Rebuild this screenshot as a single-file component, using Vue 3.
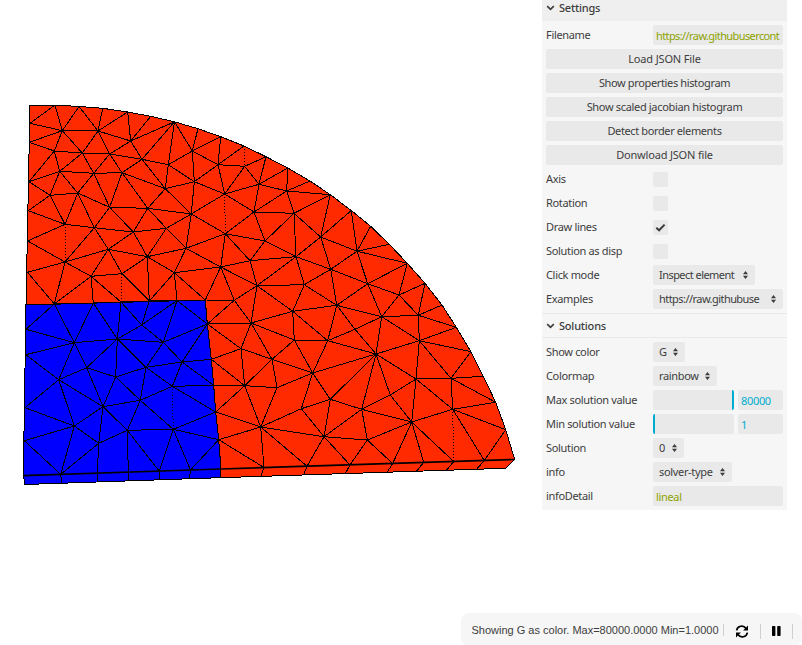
<script setup>
const points = {}
const define = (text) => {
  text.trim().split(/\s+/).forEach((item) => {
    const [name, xy] = item.split(':')
    points[name] = xy
  })
}

// outer arc
define(`A0:30,105 A1:55,105 A2:79,106.5 A3:102.7,108.3 A4:127.7,112 A5:150.7,116.3 A6:174.5,121.8
A7:198,128.7 A8:220.7,136.7 A9:244,146 A10:266,156.7 A11:287.7,168 A12:310,181 A13:330.3,194.7
A14:351.3,210.5 A15:370.7,226.3 A16:389.3,244.3 A17:407.3,263.3 A18:425,283.3 A19:442,305
A20:456.3,327.3 A21:471,351.7 A22:483.3,376.3 A23:495.7,402.3 A24:505.7,429.7 A25:514.7,459.5`)
// left side, region interface
define(`L1:30,123.3 L2:29.3,142.3 L3:29,181.7 L4:28.3,210.7 L5:27.7,241 L6:27.5,272.3 L7:26,305
L8:26,329.3 L9:25.7,354.7 L10:25,407.7 L11:24.3,440.7
I1:54.3,304 I2:93.3,303 I3:121,302 I4:149.3,301 I5:177,300.5 I6:205.3,300
J1:207.3,324 J2:211.3,359.3 J3:213.7,385.3 J4:215.7,412 J5:218.7,439.7`)
// front edges
define(`B0:23.3,475.7 B1:60.7,474.3 B2:97.3,473.2 B3:128.3,472.2 B4:159.3,471.2 B5:190.5,470 B6:221,469
B7:264,467.5 B8:307,466.2 B9:350,465 B10:392.7,463.5 B11:423.7,462.3 B12:453.7,461.5 B13:484.3,460.5
C0:25,484.5 C1:61.7,483 C2:97.7,481.7 C3:128.7,481 C4:159.3,479.7 C5:189.5,478.7 C6:220,477.7
C7:261,476.3 C8:303.7,474.7 C9:345.5,473.3 C10:387.3,472 C11:416.7,471 C12:446.7,470 C13:476.7,469.2 C14:505.7,468.3`)
// interior of the ring
define(`a:62.3,130.7 b:98,131 c:130.7,141 d:54.3,151 e:82.3,153 f:109.7,154 g:142,159.3 h:168.3,164.7
i:59.7,171.3 j:93.7,173.3 k:122,172.7 l:165.3,188.7 m:50,195.3 n:77.7,193 o:109.7,207.3 p:147.7,208.3
q:191.3,214 r:192.3,151 s:194.3,181.7 t:65,224.3 u:94.3,227.7 v:133.3,232 w:166.3,228.3 x:108.3,249.3
y:65,262 z:147.3,256.7 aa:186,248.3 ab:91,276.3 ac:122,273.7 ad:174.3,272.7 ae:218,164.7 af:244.7,166.3
ag:259,184.3 ah:224.7,194 ai:254,212 aj:286.7,191 ak:294,213.3 al:225.3,233.7 am:265,241 an:250,260.7
ao:220.7,267 ap:296,256.7 aq:320.7,237 ar:257,285.7 as:234.3,300.3 at:304.3,284.7 au:330.7,269.3
av:357,251.2 aw:336.7,305.3 ax:292.7,311.3 ay:251,323 az:294.3,340 ba:327.7,340.7 bb:241,348.7
bc:367.7,283.7 bd:399,295 be:381.7,316.7 bf:418.3,315.3 bg:355,329.3 bh:419.3,340.7 bi:376,354
bj:451,378.3 bk:416,379 bl:452.7,409.3 bm:411.7,422 bn:361.7,409.3 bo:390.3,395 bp:367.3,440
bq:272,359.3 br:312.7,373 bs:244.7,385.7 bt:277,387.7 bu:301.3,408.7 bv:330.3,399.3 bw:260.7,427 bx:324,436.7`)
// interior of the core
define(`ca:74.3,342.7 cb:117.3,339 cc:141.7,325 cd:163.3,342.3 ce:58.7,379.7 cf:86.7,367.7 cg:115.7,377
ch:146,367.3 ci:182,362 cj:103,406.7 ck:140.3,400.3 cl:172.3,386.3 cm:74.3,426 cn:98.7,443.3 co:127.3,430.3 cp:173.3,429.3`)

// each entry: origin>neighbours
const links = `A1>L1,a A2>a,b A3>b A4>b,c A5>c A6>c,g,h,r b>c,e,f a>b,L1,L2,d,e c>f,g d>L2,L3,i,e e>f,i,j
f>j,k,g g>k,h,l h>l,r,s k>j,l,o,p i>j,L3,m,n m>L3,L4,n,t n>t,j,o,u j>o o>p,u,v p>l,q,v,w l>s,q
t>L4,L5,u y>L5,L6,u,x,I1,ab u>x,v v>x,z,w w>q,z,aa x>ab,ac,z z>aa,ac,ad,I4 aa>q,ad,ao,al
ad>ao,I4,I5,I6 L6>I1 ab>I1,I2,I3,ac ac>I4 s>q,ah,r,ae r>A7,A8,ae ae>A8,A9,af,ah af>A10,ag,ah
ag>A10,A11,ah,ai,aj aj>A11,A12,A13,ai,ak ak>ai,A13,am,ap,aq ah>q,ai al>ai,q,am,an,ao ai>am
aq>A13,A14,av,au,ap av>A14,A15,A16,A17,au,bc am>an,ap an>ao,ap,ar ao>ar,as,I6 ap>ar,at,au
au>at,aw,bc ar>as,at,ax,ay as>I6,J1,ay at>ax,aw aw>ax,bc,be,bg,ba bg>ba,be,bi ax>ay,az,ba
az>ba,ay,bq,br ba>br,bi ay>J1,bb,bq bb>J1,J2,bq,bs bs>J2,J3,J4,bq,bt,bw bt>bq,br,bw bq>br
br>bu,bv,bi bu>bw,bv,bx bv>bx,bi,bn bw>J4,J5,B7,B8,bx bx>B8,B9,bn,bp J5>B7 bp>B9,B10,bm,bn
bn>bi,bo,bm bo>bi,bm,bk bm>B10,B11,B12,bl,bk bk>bi,bh,bj,bl bh>bi,be,bf,A20,A21,bj
bj>A21,A22,A23,bl bl>A23,A24,B13 A24>B13 be>bi,bf,bd,bc bd>bc,A17,A18,bf bc>A17 bf>A18,A19,A20
I1>L8,ca ca>L8,I2,L9,ce,cf cb>I2,I3,cc,ca,cd cc>I3,I4,I5,cd I5>cd,J1 J1>cd,ci L9>ce
cf>ce,cb,cg,cj cb>cg,ch cg>ch,cj,ck ch>ck,cl,cd,ci ci>cd,cl,J2,J3 cl>J3,J4,ck ck>cj,co,cp
cj>ce,cm,cn,co ce>L10,cm cm>L10,L11,B1,cn L11>B1 cn>B1,B2,co co>B3,B4,cp cp>B4,B5,J4,J5 J5>B5
B1>C1 B2>C2 B3>C3 B4>C4 B5>C5 B6>C6 B7>C7 B8>C8 B9>C9 B10>C10 B11>C11 B12>C12 B13>C13`

const toPath = (text) =>
  text.trim().split(/\s+/).map((entry) => {
    const [from, list] = entry.split('>')
    return list.split(',').map((to) => `M${points[from]}L${points[to]}`).join('')
  }).join('')

const meshPath = toPath(links)
const faintPath = toPath('t>y A9>af ah>al ac>I3 cl>cp bl>B12')
const outline = (names) => names.split(' ').map((n) => points[n]).join(' ')
const arc = Array.from({ length: 26 }, (_, n) => 'A' + n).join(' ')
const ring = outline(arc + ' C14 C6 B6 J5 J4 J3 J2 J1 I6 L7')
const core = outline('L7 I1 I2 I3 I4 I5 I6 J1 J2 J3 J4 J5 B6 C6 C0 B0')
const ridge = outline('B0 B6 A25')

const buttons = [
  { label: 'Load JSON File', tracking: -0.15 },
  { label: 'Show properties histogram', tracking: -0.36 },
  { label: 'Show scaled jacobian histogram', tracking: -0.33 },
  { label: 'Detect border elements', tracking: -0.38 },
  { label: 'Donwload JSON file', tracking: -0.18 },
]
const toggles = [
  { label: 'Axis', on: false },
  { label: 'Rotation', on: false },
  { label: 'Draw lines', on: true },
  { label: 'Solution as disp', on: false },
]
const settingsSelects = [
  { label: 'Click mode', value: 'Inspect element', width: 102 },
  { label: 'Examples', value: 'https://raw.githubuse', width: 130 },
]
const colorSelects = [
  { label: 'Show color', value: 'G', width: 32 },
  { label: 'Colormap', value: 'rainbow', width: 64 },
]
const sliders = [
  { label: 'Max solution value', value: '80000', fill: 100 },
  { label: 'Min solution value', value: '1', fill: 0 },
]
const infoSelects = [
  { label: 'Solution', value: '0', width: 31 },
  { label: 'info', value: 'solver-type', width: 79 },
]
</script>

<template>
  <main class="stage">
    <svg class="mesh" width="540" height="600" viewBox="0 0 540 600">
      <polygon :points="ring" fill="#ff2a00" />
      <polygon :points="core" fill="#0000ff" />
      <g class="lines">
        <path :d="meshPath" />
        <path class="faint" :d="faintPath" />
        <polygon :points="ring" />
        <polygon :points="core" />
        <polyline class="ridge" :points="ridge" />
      </g>
    </svg>

    <aside class="panel">
      <div class="title first">
        <svg width="9" height="6" viewBox="0 0 9 6"><path d="M1.2 1.2 4.5 4.3 7.8 1.2" /></svg>
        <span>Settings</span>
      </div>
      <div class="group">
        <div class="row">
          <span class="name">Filename</span>
          <div class="field text url">https://raw.githubusercont</div>
        </div>
        <button v-for="b in buttons" :key="b.label" :style="{ letterSpacing: b.tracking + 'px' }">{{ b.label }}</button>
        <div v-for="t in toggles" :key="t.label" class="row">
          <span class="name">{{ t.label }}</span>
          <div class="check">
            <svg v-if="t.on" width="15" height="15" viewBox="0 0 15 15"><path d="M3.3 7.8 6.1 10.3 11.6 4.6" /></svg>
          </div>
        </div>
        <div v-for="s in settingsSelects" :key="s.label" class="row">
          <span class="name">{{ s.label }}</span>
          <div class="select long" :style="{ width: s.width + 'px' }">
            <span>{{ s.value }}</span>
            <svg width="5" height="8" viewBox="0 0 5 8"><path d="M0 3.2 2.5 0 5 3.2zM0 4.8 2.5 8 5 4.8z" /></svg>
          </div>
        </div>
      </div>
      <div class="title">
        <svg width="9" height="6" viewBox="0 0 9 6"><path d="M1.2 1.2 4.5 4.3 7.8 1.2" /></svg>
        <span>Solutions</span>
      </div>
      <div class="group">
        <div v-for="s in colorSelects" :key="s.label" class="row">
          <span class="name">{{ s.label }}</span>
          <div class="select" :style="{ width: s.width + 'px' }">
            <span>{{ s.value }}</span>
            <svg width="5" height="8" viewBox="0 0 5 8"><path d="M0 3.2 2.5 0 5 3.2zM0 4.8 2.5 8 5 4.8z" /></svg>
          </div>
        </div>
        <div v-for="s in sliders" :key="s.label" class="row">
          <span class="name">{{ s.label }}</span>
          <div class="slider"><div class="fill" :style="{ width: s.fill + '%' }"></div></div>
          <div class="field number">{{ s.value }}</div>
        </div>
        <div v-for="s in infoSelects" :key="s.label" class="row">
          <span class="name">{{ s.label }}</span>
          <div class="select" :style="{ width: s.width + 'px' }">
            <span>{{ s.value }}</span>
            <svg width="5" height="8" viewBox="0 0 5 8"><path d="M0 3.2 2.5 0 5 3.2zM0 4.8 2.5 8 5 4.8z" /></svg>
          </div>
        </div>
        <div class="row">
          <span class="name">infoDetail</span>
          <div class="field text">lineal</div>
        </div>
      </div>
    </aside>

    <footer class="status">
      <span class="message">Showing G as color. Max=80000.0000 Min=1.0000</span>
      <span class="rule short"></span>
      <svg class="refresh" width="14" height="13" viewBox="0 0 14 13">
        <path class="stroke" d="M1.6 5.4A5.2 5.2 0 0 1 11 3.4M12.4 7.6A5.2 5.2 0 0 1 3 9.6" />
        <path d="M13 .5V5.4H8.1zM1 12.5V7.6H5.9z" />
      </svg>
      <span class="rule"></span>
      <svg class="pause" width="9" height="10" viewBox="0 0 9 10">
        <rect width="3.4" height="10" rx=".8" /><rect x="5.2" width="3.4" height="10" rx=".8" />
      </svg>
      <span class="rule"></span>
    </footer>
  </main>
</template>

<style>
body { margin: 0; background: #fff; }
</style>

<style scoped>
* { box-sizing: border-box; }
.stage {
  display: grid;
  grid-template-columns: 542px 245px 15px;
  grid-template-rows: 613px 32px;
  width: 802px;
  height: 645px;
  overflow: hidden;
}
.mesh { display: block; }
.lines { fill: none; stroke: #000; stroke-width: 1; shape-rendering: crispEdges; }
.faint { stroke-dasharray: 1 2; }
.ridge { stroke-width: 1.7; shape-rendering: auto; }
.panel {
  align-self: start;
  background: #f6f6f6;
  color: #3d3d3d;
  font: 11px/20px "Noto Sans", sans-serif;
  letter-spacing: -0.33px;
}
.title {
  display: flex;
  align-items: center;
  gap: 4px;
  height: 25px;
  padding: 0 4px;
  border-top: 1px solid #e9e9e9;
  border-bottom: 1px solid #e9e9e9;
  font-weight: 500;
  letter-spacing: -0.2px;
}
.title.first { height: 21px; padding-bottom: 5px; border: 0; background: #efefef; }
.title.first span { margin-top: -1px; }
.title path, .check path { fill: none; stroke: #3d3d3d; stroke-width: 1.7; }
.check path { stroke-width: 2; }
.group { display: flex; flex-direction: column; gap: 4px; padding: 4px; }
.row { display: flex; align-items: center; height: 20px; }
.name { flex: 0 0 107px; white-space: nowrap; }
button {
  height: 20px;
  padding: 0;
  border: 0;
  border-radius: 2px;
  background: #e9e9e9;
  color: inherit;
  font: inherit;
}
.field {
  height: 20px;
  padding: 1px 0 0 3px;
  border-radius: 2px;
  background: #e9e9e9;
  overflow: hidden;
  white-space: nowrap;
}
.text { width: 130px; color: #8da300; }
.url { letter-spacing: -0.6px; }
.number { width: 45px; margin-left: 4px; color: #00adcf; }
.check { width: 15px; height: 15px; border-radius: 2px; background: #e9e9e9; }
.check svg { display: block; }
.select {
  display: flex;
  align-items: center;
  justify-content: space-between;
  height: 20px;
  padding: 0 7px 0 6px;
  border-radius: 2px;
  background: #e9e9e9;
  white-space: nowrap;
}
.long { letter-spacing: -0.55px; }
.select svg { fill: #3d3d3d; flex: none; }
.slider { width: 81px; height: 20px; border-radius: 2px; background: #e9e9e9; overflow: hidden; }
.fill { min-width: 2px; height: 20px; border-right: 2px solid #00adcf; }
.status {
  grid-column: 1 / -1;
  display: flex;
  align-items: center;
  justify-self: end;
  width: 341px;
  height: 33px;
  padding: 2px 0 0 10.5px;
  border-radius: 8px;
  background: #f6f6f6;
  color: #3d3d3d;
  font: 11px/16px "Liberation Sans", sans-serif;
}
.message { width: 251.5px; margin-top: -2px; white-space: nowrap; }
.rule { width: 1px; height: 15px; margin-top: 1px; background: #cfcfcf; }
.rule.short { height: 12px; margin-top: -1px; }
.refresh { margin: 1px 11px 0 11px; }
.pause { margin: 1px 11px 0 11px; }
.stroke { fill: none; stroke: #000; stroke-width: 1.7; }
</style>
